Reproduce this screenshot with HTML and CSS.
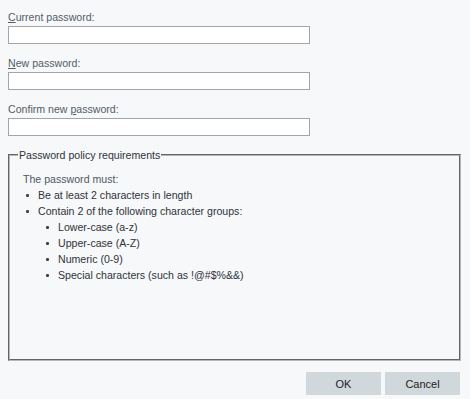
FILE: index.html
```html
<!DOCTYPE html>
<html lang="en">
<head>
    <meta charset="UTF-8">
    <title>Change password</title>
    <link rel="stylesheet" href="styles.css">
</head>
<body>

    <div class="dialog">
        <div class="field">
            <label for="current"><u>C</u>urrent password:</label>
            <input id="current" type="password">
        </div>
        <div class="field">
            <label for="newpw"><u>N</u>ew password:</label>
            <input id="newpw" type="password">
        </div>
        <div class="field">
            <label for="confirm">Confirm new <u>p</u>assword:</label>
            <input id="confirm" type="password">
        </div>

        <fieldset class="policy">
            <legend>Password policy requirements</legend>
            <p>The password must:</p>
            <ul>
                <li>Be at least 2 characters in length</li>
                <li>Contain 2 of the following character groups:
                    <ul>
                        <li>Lower-case (a-z)</li>
                        <li>Upper-case (A-Z)</li>
                        <li>Numeric (0-9)</li>
                        <li>Special characters (such as !@#$%&amp;&amp;)</li>
                    </ul>
                </li>
            </ul>
        </fieldset>

        <div class="buttons">
            <button>OK</button>
            <button>Cancel</button>
        </div>
    </div>

</body>
</html>
```

FILE: styles.css
```css
body {
    font-family: 'Liberation Sans', Arial, sans-serif;
    font-size: 10.6px;
    margin: 0;
    padding: 0;
    background-color: #f6f8fa;
    color: #3a4550;
}
.dialog {
    padding: 9px 9px 0 8px;
}
.field {
    margin-bottom: 11px;
}
.field label {
    display: block;
    line-height: 16px;
    margin-bottom: 1px;
    color: #555d66;
}
.field u {
    text-decoration-color: #555d66;
}
.field input {
    display: block;
    box-sizing: border-box;
    width: 302px;
    height: 18px;
    margin: 0;
    border: 1px solid #a3a6a8;
    background-color: #fff;
}
.policy {
    margin: 0;
    padding: 8px 10px 0 13px;
    height: 214px;
    box-sizing: border-box;
    border: 2px groove #b4b8ba;
}
.policy legend {
    padding: 0 1px;
    margin-left: -5px;
    line-height: 16px;
    color: #2f3338;
}
.policy p {
    margin: 0;
    line-height: 16px;
    color: #4e5862;
}
.policy ul {
    list-style: none;
    margin: 0;
    padding: 0;
}
.policy li {
    position: relative;
    padding-left: 15px;
    line-height: 16px;
    color: #2f3338;
}
.policy li::before {
    content: "";
    position: absolute;
    left: 3px;
    top: 7px;
    width: 3px;
    height: 3px;
    border-radius: 1px;
    background-color: #444;
}
.policy li ul {
    margin-left: 5px;
}
.buttons {
    display: flex;
    justify-content: flex-end;
    gap: 4px;
    margin-top: 11px;
    margin-right: 1px;
}
.buttons button {
    width: 75px;
    height: 23px;
    border: none;
    background-color: #d1d8dc;
    color: #222;
    font-family: inherit;
    font-size: 11px;
}
```
